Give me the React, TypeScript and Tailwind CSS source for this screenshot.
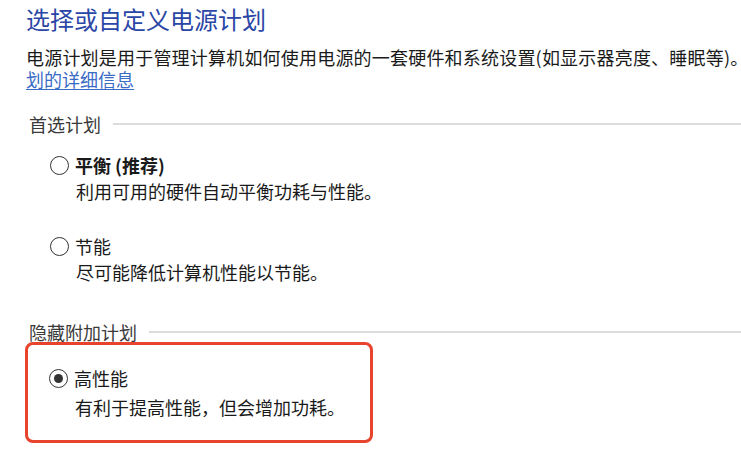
import React from 'react';

const font = { fontFamily: '"Noto Sans CJK SC", "Noto Sans", sans-serif' };

function Radio({ checked }: { checked?: boolean }) {
  return (
    <span className="flex h-[19px] w-[19px] shrink-0 items-center justify-center rounded-full border-[1.5px] border-[#333333] bg-white">
      {checked && <span className="h-[9px] w-[9px] rounded-full bg-[#333333]" />}
    </span>
  );
}

function GroupLabel({ text }: { text: string }) {
  return (
    <div className="flex items-center pl-[3px] text-[18px] leading-[20px] text-[#3a3a3a]">
      <span className="whitespace-nowrap">{text}</span>
      <div className="ml-[12px] h-[2px] flex-1 bg-[#dcdcdc]" />
    </div>
  );
}

function Plan({ name, desc, bold, checked, descGap }: { name: string; desc: string; bold?: boolean; checked?: boolean; descGap: string }) {
  return (
    <div>
      <div className="flex h-[22px] items-center gap-[6px]">
        <Radio checked={checked} />
        <span className={'text-[18px] leading-[22px] text-[#1a1a1a] ' + (bold ? 'font-bold' : '')}>{name}</span>
      </div>
      <div className={'pl-[26px] text-[18px] leading-[22px] text-[#1a1a1a] ' + descGap}>{desc}</div>
    </div>
  );
}

export default function App() {
  return (
    <div className="h-[453px] w-[741px] overflow-hidden bg-white pl-[26px] pt-[3px]" style={font}>
      {/* Header */}
      <h1 className="text-[24px] font-normal leading-[32px] text-[#2a46a6]">选择或自定义电源计划</h1>
      <div className="mt-[11px] text-[18px] leading-[22px] text-[#1a1a1a]">
        <div className="whitespace-nowrap tracking-[0.2px]">
          电源计划是用于管理计算机如何使用电源的一套硬件和系统设置(如显示器亮度、睡眠等)。
        </div>
        <div>
          <a className="text-[#3a6cc6] underline underline-offset-2">划的详细信息</a>
        </div>
      </div>

      {/* Preferred plans */}
      <div className="mt-[24px]">
        <GroupLabel text="首选计划" />
      </div>
      <div className="mt-[20px] pl-[24px]">
        <Plan name="平衡 (推荐)" desc="利用可用的硬件自动平衡功耗与性能。" bold descGap="mt-[4px]" />
        <div className="mt-[33px]">
          <Plan name="节能" desc="尽可能降低计算机性能以节能。" descGap="mt-[4px]" />
        </div>
      </div>

      {/* Hidden plans */}
      <div className="mt-[39px]">
        <GroupLabel text="隐藏附加计划" />
      </div>
      <div className="-ml-[1px] w-[348px] rounded-[8px] border-[3px] border-[#e8432d] pb-[22px] pl-[21px] pt-[22px]">
        <Plan name="高性能" desc="有利于提高性能，但会增加功耗。" checked descGap="mt-[7px]" />
      </div>
    </div>
  );
}
